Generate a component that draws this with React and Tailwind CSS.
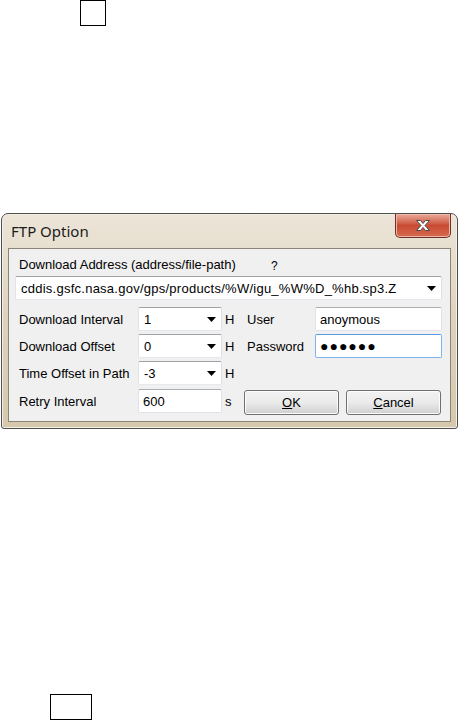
import React from 'react';

const Arrow = () => (
  <svg width="9" height="5" viewBox="0 0 9 5" className="shrink-0">
    <path d="M0 0 H9 L4.5 5 Z" fill="#000" />
  </svg>
);

const Combo = ({ value, width = 'w-[84px]', wide = false }) => (
  <div className={`${width} h-[24px] flex items-center justify-between pl-[5px] pr-[5px] bg-white border border-[#abadb3] border-t-[#a0a2a8] border-b-[#e3e9ef] border-l-[#e2e3ea] border-r-[#dbdfe6] rounded-[2px]`}>
    <span className={`text-[13px] leading-none ${wide ? 'tracking-[0.25px]' : ''}`}>{value}</span>
    <Arrow />
  </div>
);

const Field = ({ children, focus = false, width = 'w-[127px]' }) => (
  <div className={`${width} h-[24px] flex items-center pl-[4px] bg-white rounded-[2px] border ${focus ? 'border-[#7eb4ea] border-t-[#569de5]' : 'border-[#e2e3ea] border-t-[#abadb3]'}`}>
    {children}
  </div>
);

const Button = ({ children }) => (
  <button className="w-[95px] h-[25px] rounded-[3px] border border-[#707070] bg-gradient-to-b from-[#f2f2f2] via-[#ebebeb] to-[#cfcfcf] text-[13px] leading-none text-black shadow-[inset_0_0_0_1px_#fcfcfc]">
    {children}
  </button>
);

export default function App() {
  return (
    <div className="w-[459px] h-[720px] bg-white overflow-hidden flex flex-col font-['Liberation_Sans',Arial,sans-serif] text-black">
      {/* top marker */}
      <div className="ml-[80px] w-[26px] h-[26px] border border-black shrink-0" />

      {/* dialog */}
      <div className="relative mt-[187px] ml-px w-[457px] shrink-0 rounded-t-[7px] rounded-b-[3px] border border-[#4f4f4f] bg-gradient-to-b from-[#ece5d8] via-[#ddd2bd] to-[#d6c8ac] px-[6px] pb-[6px] shadow-[inset_0_0_0_1px_#f3efe6]">
        {/* title bar */}
        <div className="h-[34px] flex items-center pl-[3px]">
          <span className="text-[15px] text-[#1b1b1b] font-['Noto_Sans',sans-serif] leading-none">FTP Option</span>
        </div>
        <div className="absolute top-0 right-[6px] w-[56px] h-[24px] rounded-b-[5px] border border-t-0 border-[#6d3026] bg-gradient-to-b from-[#e9ab9c] via-[#c94a33] to-[#d66a4f] flex items-center justify-center shadow-[inset_0_0_0_1px_#f0b5a5]">
          <svg width="16" height="13" viewBox="0 0 16 13">
            <path d="M1.5 1.5 H5.5 L8 4.5 L10.5 1.5 H14.5 L10 6.5 L14.5 11.5 H10.5 L8 8.5 L5.5 11.5 H1.5 L6 6.5 Z" fill="#fff" stroke="#4a4a4a" strokeWidth="1" strokeLinejoin="round" />
          </svg>
        </div>

        {/* content */}
        <div className="border border-[#8c8577] bg-[#f0f0f0] pt-[7px] pb-[7px]">
          <div className="h-[16px] flex items-center pl-[10px] text-[13px] leading-none">
            <span className="w-[252px]">Download Address (address/file-path)</span>
            <span className="text-[12px] mt-[4px]">?</span>
          </div>
          <div className="mt-[4px] ml-[6px]">
            <Combo value="cddis.gsfc.nasa.gov/gps/products/%W/igu_%W%D_%hb.sp3.Z" width="w-[427px]" wide />
          </div>

          <div className="mt-[7px] pl-[10px] flex flex-col gap-[3px] text-[13px] leading-none">
            <div className="h-[24px] flex items-center">
              <span className="w-[119px]">Download Interval</span>
              <Combo value="1" />
              <span className="w-[22px] pl-[3px]">H</span>
              <span className="w-[71px] pl-[3px]">User</span>
              <Field><span>anoymous</span></Field>
            </div>
            <div className="h-[24px] flex items-center">
              <span className="w-[119px]">Download Offset</span>
              <Combo value="0" />
              <span className="w-[22px] pl-[3px]">H</span>
              <span className="w-[71px] pl-[3px]">Password</span>
              <Field focus>
                <span className="text-[14px] tracking-[1px] leading-none">●●●●●●</span>
              </Field>
            </div>
            <div className="h-[24px] flex items-center">
              <span className="w-[119px]">Time Offset in Path</span>
              <Combo value="-3" />
              <span className="w-[22px] pl-[3px]">H</span>
            </div>
            <div className="h-[26px] flex items-center">
              <span className="w-[119px]">Retry Interval</span>
              <Field width="w-[84px]"><span>600</span></Field>
              <span className="w-[22px] pl-[3px]">s</span>
              <div className="flex gap-[7px] mt-[2px]">
                <Button><span className="underline">O</span>K</Button>
                <Button><span className="underline">C</span>ancel</Button>
              </div>
            </div>
          </div>
        </div>
      </div>

      {/* bottom marker */}
      <div className="mt-auto ml-[50px] w-[42px] h-[26px] border border-black shrink-0" />
    </div>
  );
}
